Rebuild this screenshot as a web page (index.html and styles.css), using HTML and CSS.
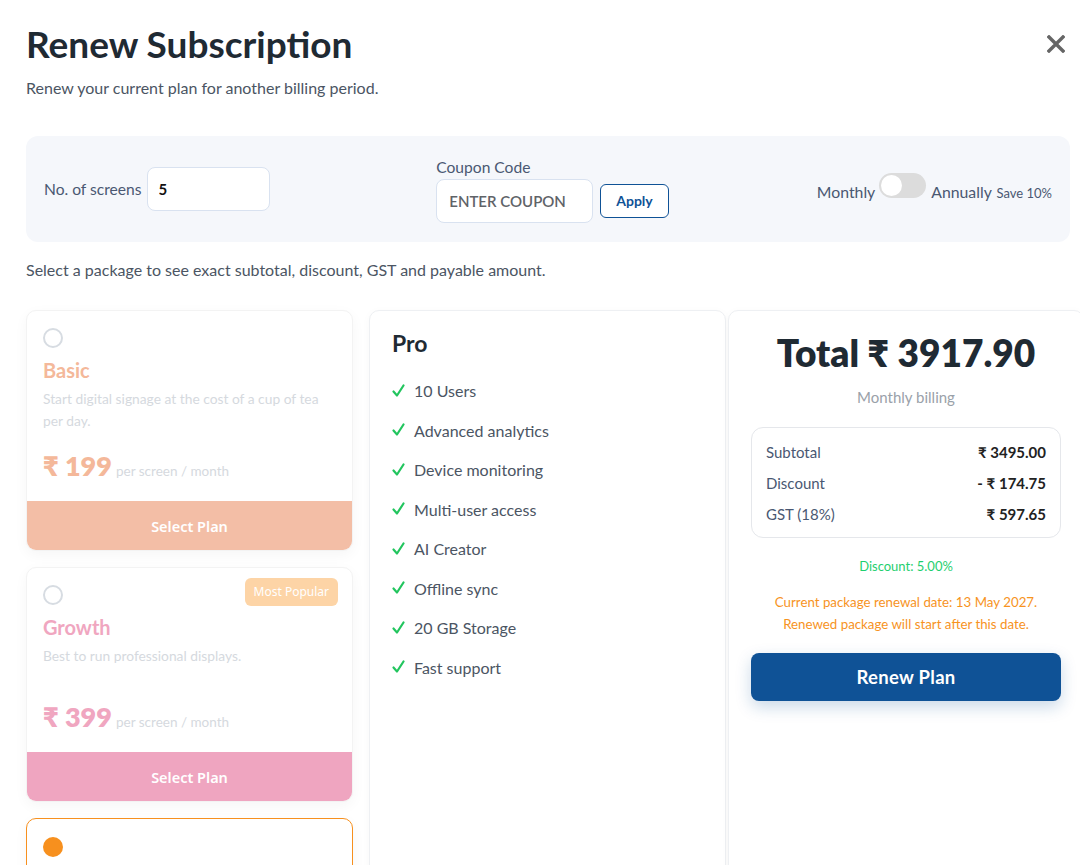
FILE: index.html
```html
<!DOCTYPE html>
<html lang="en">
<head>
    <meta charset="UTF-8">
    <meta name="viewport" content="width=device-width, initial-scale=1.0">
    <title>Renew Subscription</title>
    <link rel="stylesheet" href="styles.css">
</head>
<body>

<div class="modal">

    <div class="modal-head">
        <h1>Renew Subscription</h1>
        <button class="close" aria-label="Close">
            <svg width="18" height="18" viewBox="0 0 18 18"><path d="M2 2 L16 16 M16 2 L2 16" stroke="#666" stroke-width="3.4" stroke-linecap="square"/></svg>
        </button>
    </div>
    <p class="subtitle">Renew your current plan for another billing period.</p>

    <!-- filters -->
    <div class="filters">
        <div class="field-inline">
            <label for="screens">No. of screens</label>
            <input type="text" id="screens" class="screens-input" value="5">
        </div>
        <div class="coupon">
            <label for="coupon">Coupon Code</label>
            <div class="coupon-row">
                <input type="text" id="coupon" class="coupon-input" placeholder="ENTER COUPON">
                <button class="apply">Apply</button>
            </div>
        </div>
        <div class="billing">
            <span>Monthly</span>
            <span class="toggle"><span class="knob"></span></span>
            <span>Annually <small class="save">Save 10%</small></span>
        </div>
    </div>

    <p class="hint">Select a package to see exact subtotal, discount, GST and payable amount.</p>

    <div class="plans">

        <!-- plan list -->
        <div class="plan-list">
            <div class="plan plan-basic">
                <div class="plan-body">
                    <span class="radio"></span>
                    <h3>Basic</h3>
                    <p class="desc">Start digital signage at the cost of a cup of tea per day.</p>
                    <div class="price"><strong>₹ 199</strong> <span>per screen / month</span></div>
                </div>
                <button class="select">Select Plan</button>
            </div>

            <div class="plan plan-growth">
                <span class="badge">Most Popular</span>
                <div class="plan-body">
                    <span class="radio"></span>
                    <h3>Growth</h3>
                    <p class="desc">Best to run professional displays.</p>
                    <div class="price"><strong>₹ 399</strong> <span>per screen / month</span></div>
                </div>
                <button class="select">Select Plan</button>
            </div>

            <div class="plan plan-pro">
                <div class="plan-body">
                    <span class="radio checked"></span>
                </div>
            </div>
        </div>

        <!-- features -->
        <div class="panel features">
            <h2>Pro</h2>
            <ul>
                <li><svg class="tick" width="13" height="14" viewBox="0 0 13 14"><path d="M1.5 7.5 L5 11.5 L11.5 1.5" fill="none" stroke="#22c55e" stroke-width="2.2" stroke-linecap="round" stroke-linejoin="round"/></svg>10 Users</li>
                <li><svg class="tick" width="13" height="14" viewBox="0 0 13 14"><path d="M1.5 7.5 L5 11.5 L11.5 1.5" fill="none" stroke="#22c55e" stroke-width="2.2" stroke-linecap="round" stroke-linejoin="round"/></svg>Advanced analytics</li>
                <li><svg class="tick" width="13" height="14" viewBox="0 0 13 14"><path d="M1.5 7.5 L5 11.5 L11.5 1.5" fill="none" stroke="#22c55e" stroke-width="2.2" stroke-linecap="round" stroke-linejoin="round"/></svg>Device monitoring</li>
                <li><svg class="tick" width="13" height="14" viewBox="0 0 13 14"><path d="M1.5 7.5 L5 11.5 L11.5 1.5" fill="none" stroke="#22c55e" stroke-width="2.2" stroke-linecap="round" stroke-linejoin="round"/></svg>Multi-user access</li>
                <li><svg class="tick" width="13" height="14" viewBox="0 0 13 14"><path d="M1.5 7.5 L5 11.5 L11.5 1.5" fill="none" stroke="#22c55e" stroke-width="2.2" stroke-linecap="round" stroke-linejoin="round"/></svg>AI Creator</li>
                <li><svg class="tick" width="13" height="14" viewBox="0 0 13 14"><path d="M1.5 7.5 L5 11.5 L11.5 1.5" fill="none" stroke="#22c55e" stroke-width="2.2" stroke-linecap="round" stroke-linejoin="round"/></svg>Offline sync</li>
                <li><svg class="tick" width="13" height="14" viewBox="0 0 13 14"><path d="M1.5 7.5 L5 11.5 L11.5 1.5" fill="none" stroke="#22c55e" stroke-width="2.2" stroke-linecap="round" stroke-linejoin="round"/></svg>20 GB Storage</li>
                <li><svg class="tick" width="13" height="14" viewBox="0 0 13 14"><path d="M1.5 7.5 L5 11.5 L11.5 1.5" fill="none" stroke="#22c55e" stroke-width="2.2" stroke-linecap="round" stroke-linejoin="round"/></svg>Fast support</li>
            </ul>
        </div>

        <!-- summary -->
        <div class="panel summary">
            <div class="total">Total ₹ 3917.90</div>
            <p class="period">Monthly billing</p>
            <div class="breakdown">
                <div class="row"><span>Subtotal</span><strong>₹ 3495.00</strong></div>
                <div class="row"><span>Discount</span><strong>- ₹ 174.75</strong></div>
                <div class="row"><span>GST (18%)</span><strong>₹ 597.65</strong></div>
            </div>
            <p class="discount-note">Discount: 5.00%</p>
            <p class="renew-note">Current package renewal date: 13 May 2027.<br>Renewed package will start after this date.</p>
            <button class="renew">Renew Plan</button>
        </div>

    </div>
</div>

</body>
</html>
```

FILE: styles.css
```css
html, body {
    overflow: hidden;
}
body {
    font-family: Lato, "Noto Sans", sans-serif;
    background-color: #fff;
    color: #333;
    margin: 0;
    padding: 0;
}
.modal {
    padding: 19px 0 0 26px;
    width: 1058px;
}
.modal-head {
    display: flex;
    justify-content: space-between;
    align-items: center;
    width: 1044px;
}
.modal-head h1 {
    margin: 0;
    font-size: 37px;
    font-weight: 700;
    color: #1f2a33;
    line-height: 50px;
}
.close {
    background: none;
    border: none;
    padding: 0;
    margin-right: 5px;
    cursor: pointer;
    display: flex;
}
.subtitle {
    margin: 8px 0 0;
    font-size: 16px;
    color: #4b5563;
    line-height: 22px;
}
.filters {
    margin-top: 37px;
    width: 1044px;
    height: 106px;
    box-sizing: border-box;
    padding: 0 18px 0 18px;
    background-color: #f5f7fb;
    border-radius: 12px;
    display: grid;
    grid-template-columns: 1fr 1fr 1fr;
    align-items: center;
}
.field-inline {
    display: flex;
    align-items: center;
    gap: 5px;
    font-size: 15.6px;
    color: #4a5872;
}
.screens-input, .coupon-input {
    border: 1px solid #d9e2f0;
    border-radius: 8px;
    height: 44px;
    box-sizing: border-box;
    background: #fff;
    font-family: inherit;
    outline: none;
}
.screens-input {
    width: 123px;
    padding: 0 11px;
    font-size: 15px;
    font-weight: 700;
    color: #111;
}
.coupon {
    justify-self: center;
    margin-left: 9px;
    margin-top: 2px;
    font-size: 15.6px;
    color: #4a5872;
    display: flex;
    flex-direction: column;
    gap: 3px;
}
.coupon-row {
    display: flex;
    align-items: center;
    gap: 7px;
}
.coupon-input {
    width: 157px;
    padding: 0 12px;
    font-size: 15px;
    font-weight: 600;
}
.coupon-input::placeholder {
    color: #5f6368;
}
.apply {
    height: 34px;
    padding: 0 15px;
    border: 1.5px solid #0f5296;
    border-radius: 6px;
    background: #fff;
    color: #0f5296;
    font-family: inherit;
    font-size: 14px;
    font-weight: 700;
}
.billing {
    justify-self: end;
    display: flex;
    align-items: center;
    gap: 4px;
    font-size: 15.8px;
    color: #4a5872;
    margin-top: 4px;
}
.save {
    font-size: 13px;
    margin-left: 1px;
}
.toggle {
    width: 47px;
    height: 25px;
    border-radius: 13px;
    background-color: #dcdcdc;
    margin: 0 1px 12px 0;
    display: flex;
    align-items: center;
    padding: 2px;
    box-sizing: border-box;
}
.knob {
    width: 21px;
    height: 21px;
    border-radius: 50%;
    background: #fff;
}
.hint {
    margin: 17px 0 0;
    font-size: 16px;
    color: #4b5563;
    line-height: 22px;
}

/* plan grid */
.plans {
    margin-top: 29px;
    display: flex;
    align-items: flex-start;
}
.plan-list {
    width: 327px;
    display: flex;
    flex-direction: column;
    gap: 16px;
    margin-right: 16px;
}
.plan {
    position: relative;
    border: 1px solid #f3f3f3;
    border-radius: 10px;
    background: #fff;
    box-shadow: 0 4px 14px rgba(0, 0, 0, 0.04);
    overflow: hidden;
}
.plan-body {
    padding: 17px 16px 0 16px;
}
.radio {
    display: block;
    width: 20px;
    height: 20px;
    box-sizing: border-box;
    border: 2px solid #d7dce2;
    border-radius: 50%;
}
.radio.checked {
    border: none;
    background-color: #f7901e;
}
.plan h3 {
    margin: 9px 0 0;
    font-size: 20px;
    font-weight: 700;
    line-height: 26px;
}
.desc {
    margin: 5px 0 0;
    max-width: 285px;
    font-size: 13.8px;
    line-height: 22px;
    color: #d5d9de;
    min-height: 38px;
}
.price {
    margin-top: 17px;
    line-height: 34px;
    height: 34px;
}
.price strong {
    font-size: 27px;
    font-weight: 800;
}
.price span {
    font-size: 13.5px;
    color: #d5d9de;
}
.select {
    display: block;
    width: 100%;
    height: 49px;
    margin-top: 18px;
    border: none;
    color: #fff;
    font-family: "Noto Sans", sans-serif;
    font-size: 14.5px;
    font-weight: 600;
}
.plan-basic h3, .plan-basic .price strong {
    color: #f4b89a;
}
.plan-basic .select {
    background-color: #f3bea6;
}
.plan-growth h3, .plan-growth .price strong {
    color: #f0a6c0;
}
.plan-growth .select {
    background-color: #efa5c0;
}
.badge {
    position: absolute;
    top: 10px;
    right: 14px;
    background-color: #fdd4a6;
    color: #fff;
    font-family: "Noto Sans", sans-serif;
    font-size: 12px;
    padding: 0 9px;
    line-height: 28px;
    border-radius: 6px;
}
.plan-pro {
    border: 1.5px solid #f7901e;
    height: 120px;
}
.plan-pro .plan-body {
    padding-top: 18px;
}

/* panels */
.panel {
    background: #fff;
    border: 1px solid #eef0f3;
    border-radius: 10px;
    box-shadow: 0 2px 10px rgba(0, 0, 0, 0.03);
    box-sizing: border-box;
    height: 600px;
}
.features {
    width: 357px;
    margin-right: 2px;
    padding: 17px 22px;
}
.features h2 {
    margin: 0;
    font-size: 23px;
    font-weight: 700;
    color: #1f2a33;
    line-height: 30px;
}
.features ul {
    list-style: none;
    margin: 13px 0 0;
    padding: 0;
}
.features li {
    display: flex;
    align-items: center;
    height: 39.5px;
    font-size: 16px;
    color: #4b5563;
}
.tick {
    margin-right: 9px;
    flex-shrink: 0;
}
.summary {
    width: 356px;
    padding: 20px 22px;
    text-align: center;
}
.total {
    font-size: 37px;
    font-weight: 800;
    color: #1f2a33;
    line-height: 44px;
}
.period {
    margin: 13px 0 0;
    font-size: 15px;
    color: #9aa1a9;
}
.breakdown {
    margin-top: 21px;
    border: 1px solid #e5e7eb;
    border-radius: 12px;
    padding: 8px 14px;
}
.row {
    display: flex;
    justify-content: space-between;
    align-items: center;
    height: 31px;
    font-size: 15px;
    color: #4a5872;
}
.row strong {
    color: #222;
    font-weight: 700;
}
.discount-note {
    margin: 20px 0 0;
    font-size: 13px;
    color: #1fcf6f;
}
.renew-note {
    margin: 17px 0 0;
    font-size: 13.3px;
    line-height: 22px;
    color: #f7931e;
}
.renew {
    display: block;
    width: 100%;
    height: 48px;
    margin-top: 18px;
    border: none;
    border-radius: 8px;
    background-color: #0f5296;
    color: #fff;
    font-family: inherit;
    font-size: 18.5px;
    font-weight: 700;
    letter-spacing: 0.3px;
    box-shadow: 0 6px 16px rgba(15, 82, 150, 0.22);
}
```
